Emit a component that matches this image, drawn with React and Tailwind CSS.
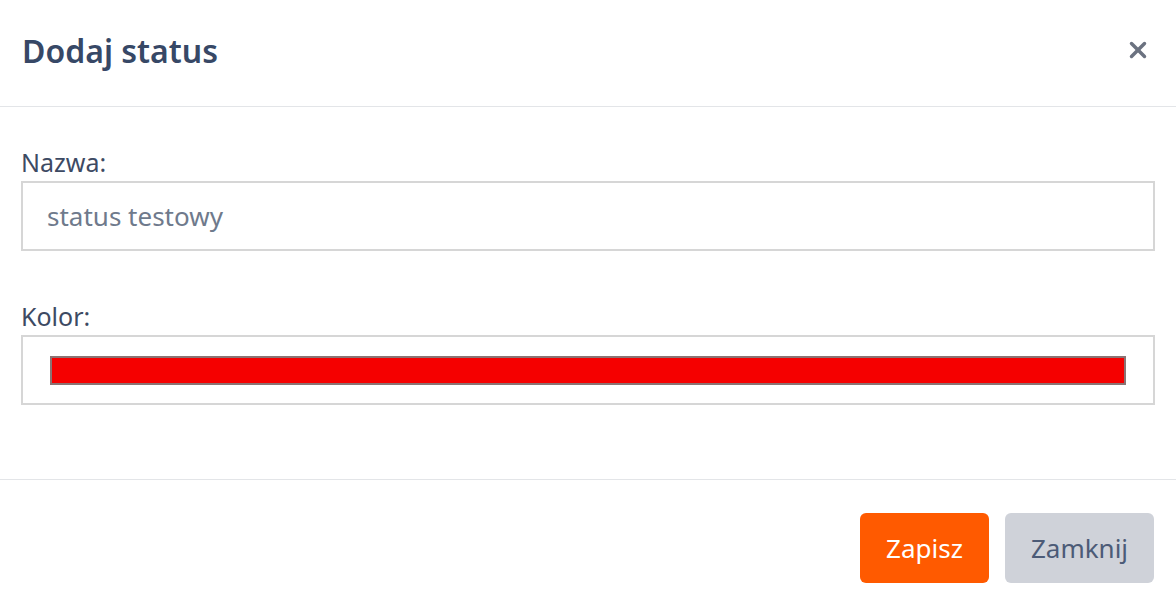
import { X } from 'lucide-react'

export default function App() {
    return (
        <div className="h-[608px] w-[1176px] bg-white text-[#3d4a63]" style={{ fontFamily: '"Noto Sans", "Open Sans", sans-serif' }}>
            <div className="flex h-[107px] items-center justify-between border-b border-[#e3e5e8] pl-[22px] pr-[25px]">
                <h1 className="pb-[4px] text-[32px] font-semibold leading-none text-[#374866]">Dodaj status</h1>
                <button className="pb-[6px] text-[#6b7280]">
                    <X size={26} strokeWidth={3.2} />
                </button>
            </div>
            <div className="px-[21px] pt-[38px] pb-[74px]">
                <label className="block pb-[2px] text-[25px] leading-[34px]">Nazwa:</label>
                <div className="flex h-[70px] items-center border-2 border-[#d6d6d6] pl-[24px] text-[26px] text-[#6f7a8c]">
                    status testowy
                </div>
                <label className="mt-[48px] block pb-[2px] text-[25px] leading-[34px]">Kolor:</label>
                <div className="flex h-[70px] items-center border-2 border-[#d6d6d6] px-[27px]">
                    <div className="h-[29px] w-full border-2 border-[#8a7373] bg-[#f50000]" />
                </div>
            </div>
            <div className="flex justify-end gap-[16px] border-t border-[#e3e5e8] pt-[33px] pr-[22px]">
                <button className="h-[70px] w-[129px] rounded-[6px] bg-[#ff5a00] text-[26px] text-white">Zapisz</button>
                <button className="h-[70px] w-[149px] rounded-[6px] bg-[#cfd2d9] text-[26px] text-[#4c5b77]">Zamknij</button>
            </div>
        </div>
    )
}
